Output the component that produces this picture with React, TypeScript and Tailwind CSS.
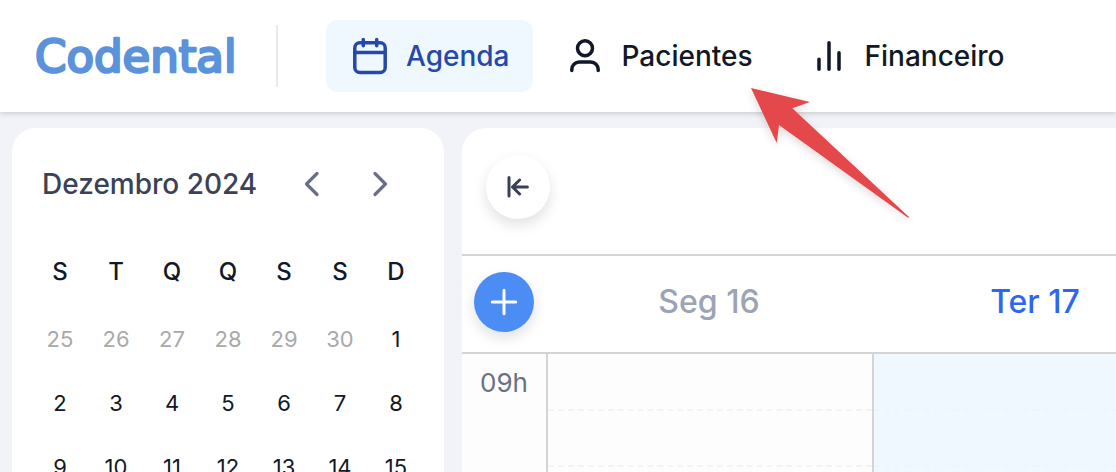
import type { ReactNode } from "react"
import clsx from "clsx"

const weekdays = ["S", "T", "Q", "Q", "S", "S", "D"]

const weeks = [
  [25, 26, 27, 28, 29, 30, 1],
  [2, 3, 4, 5, 6, 7, 8],
  [9, 10, 11, 12, 13, 14, 15],
]

const days = [
  { label: "Seg 16", today: false },
  { label: "Ter 17", today: true },
]

function Logo() {
  return (
    <svg className="h-16 w-[204px]" viewBox="0 0 204 64" role="img" aria-label="Codental">
      <text
        x="-1"
        y="48"
        fontSize="45"
        fontFamily="DejaVu Sans, sans-serif"
        fill="#5a92dc"
        stroke="#5a92dc"
        strokeWidth="2.6"
        strokeLinejoin="round"
      >
        Codental
      </text>
    </svg>
  )
}

function NavIcon({ children }: { children: ReactNode }) {
  return (
    <svg
      className="size-10"
      viewBox="0 0 40 40"
      fill="none"
      stroke="currentColor"
      strokeWidth="3.5"
      strokeLinecap="round"
      strokeLinejoin="round"
      aria-hidden="true"
    >
      {children}
    </svg>
  )
}

function NavLink({
  label,
  active = false,
  children,
}: {
  label: string
  active?: boolean
  children: ReactNode
}) {
  return (
    <a
      href="#"
      aria-current={active ? "page" : undefined}
      className={clsx(
        "flex h-[72px] items-center gap-4 rounded-xl px-6 text-[28px] font-medium",
        active ? "bg-[#f0f8ff] text-[#2549a8]" : "text-[#111827]",
      )}
    >
      <NavIcon>{children}</NavIcon>
      {label}
    </a>
  )
}

function Header() {
  return (
    <header className="z-10 flex h-28 shrink-0 items-center bg-white pl-9 shadow-[0_1px_6px_rgba(0,0,0,0.2)]">
      <Logo />
      <div className="mr-12 ml-9 h-[62px] w-0.5 shrink-0 bg-[#e9eaf0]" />
      <nav className="flex gap-2">
        <NavLink label="Agenda" active>
          <rect x="4.8" y="6.8" width="30.4" height="29.8" rx="5" />
          <path d="M4.8 16.4h30.4M13.3 3.4v6.4M26.7 3.4v6.4" />
        </NavLink>
        <NavLink label="Pacientes">
          <circle cx="20" cy="12.3" r="7.5" />
          <path d="M6.8 34.6v-1.1a7.4 7.4 0 0 1 7.4-7.4h11.6a7.4 7.4 0 0 1 7.4 7.4v1.1" />
        </NavLink>
        <NavLink label="Financeiro">
          <path d="M10 23.3v10M20 6.7v26.6M30 16.7v16.6" />
        </NavLink>
      </nav>
    </header>
  )
}

function MonthButton({ label, path }: { label: string; path: string }) {
  return (
    <button type="button" aria-label={label} className="flex size-10 items-center justify-center">
      <svg
        className="size-10"
        viewBox="0 0 40 40"
        fill="none"
        stroke="#687085"
        strokeWidth="3.2"
        strokeLinecap="round"
        strokeLinejoin="round"
      >
        <path d={path} />
      </svg>
    </button>
  )
}

function MonthCalendar() {
  return (
    <aside className="w-[432px] shrink-0 rounded-t-3xl bg-white px-5 pt-8">
      <div className="mb-7 flex h-12 items-center justify-between pr-6 pl-2.5">
        <h2 className="text-[28px] font-medium text-[#3b4256]">Dezembro 2024</h2>
        <div className="flex gap-7">
          <MonthButton label="Mês anterior" path="M25 9.5 14.5 20 25 30.5" />
          <MonthButton label="Próximo mês" path="M15 9.5 25.5 20 15 30.5" />
        </div>
      </div>
      <table className="w-full table-fixed text-center text-[#111827]">
        <thead>
          <tr className="h-[71px]">
            {weekdays.map((day, i) => (
              <th key={i} scope="col" className="text-2xl font-medium">
                {day}
              </th>
            ))}
          </tr>
        </thead>
        <tbody>
          {weeks.map((week, row) => (
            <tr key={row} className="h-16">
              {week.map((day) => (
                <td
                  key={day}
                  className={clsx("text-[22px]", row === 0 && day > 20 && "text-[#a9a9a9]")}
                >
                  {day}
                </td>
              ))}
            </tr>
          ))}
        </tbody>
      </table>
    </aside>
  )
}

function Schedule() {
  return (
    <main className="flex min-w-0 flex-1 flex-col overflow-hidden rounded-tl-3xl bg-white">
      <div className="flex h-32 shrink-0 items-center border-b-2 border-[#d4d4d4] px-6 pb-2">
        <button
          type="button"
          aria-label="Recolher calendário"
          className="flex size-16 items-center justify-center rounded-full bg-white shadow-[0_6px_14px_rgba(0,0,0,0.12)]"
        >
          <svg
            className="size-8"
            viewBox="0 0 32 32"
            fill="none"
            stroke="#374057"
            strokeWidth="3"
            strokeLinecap="round"
            strokeLinejoin="round"
          >
            <path d="M7 6.5v18.6M25.4 16H10.5M17.6 9l-7.1 7 7.1 7" />
          </svg>
        </button>
      </div>

      <div className="flex h-[98px] shrink-0 items-center border-b-2 border-[#d4d4d4] pb-1">
        <div className="w-[84px] shrink-0 pl-3">
          <button
            type="button"
            aria-label="Novo agendamento"
            className="flex size-[60px] items-center justify-center rounded-full bg-[#4b8df5] shadow-[0_6px_14px_rgba(0,0,0,0.12)]"
          >
            <svg
              className="size-8"
              viewBox="0 0 32 32"
              stroke="white"
              strokeWidth="3"
              strokeLinecap="round"
            >
              <path d="M16 4.2v23.6M4.2 16h23.6" />
            </svg>
          </button>
        </div>
        {days.map((day) => (
          <div
            key={day.label}
            className={clsx(
              "w-[326px] shrink-0 text-center text-[32px] font-medium",
              day.today ? "text-[#2f66ee]" : "text-[#9ba3b4]",
            )}
          >
            {day.label}
          </div>
        ))}
      </div>

      <div className="flex flex-1 bg-[#fdfdfd]">
        <div className="w-[84px] shrink-0 pt-3 text-center text-[26px] leading-[34px] text-[#687085]">
          09h
        </div>
        {days.map((day) => (
          <div
            key={day.label}
            className={clsx(
              "w-[326px] shrink-0 border-l-2 border-[#d4d4d4] pt-px",
              day.today && "bg-[#f0f8ff]",
            )}
          >
            <div className="h-14 border-b-2 border-dashed border-[#f2f3f7]" />
            <div className="h-14 border-b-2 border-dashed border-[#f2f3f7]" />
          </div>
        ))}
      </div>
    </main>
  )
}

// Red arrow that points the reader to "Pacientes"
function PointerArrow() {
  return (
    <svg
      className="pointer-events-none absolute top-[88px] left-[751px] z-20 h-[130px] w-[159px] overflow-visible drop-shadow-[0_3px_4px_rgba(0,0,0,0.15)]"
      viewBox="0 0 159 130"
      aria-hidden="true"
    >
      <path d="M0 0 59 14 41.3 20.3 158.3 129.2 157 129.8 28 37 25.7 55Z" fill="#e5484a" />
    </svg>
  )
}

export default function App() {
  return (
    <div className="relative flex h-screen flex-col overflow-hidden bg-[#f2f3f8] font-[Inter,sans-serif]">
      <Header />
      <div className="flex min-h-0 flex-1 gap-[18px] pt-4 pl-3">
        <MonthCalendar />
        <Schedule />
      </div>
      <PointerArrow />
    </div>
  )
}
